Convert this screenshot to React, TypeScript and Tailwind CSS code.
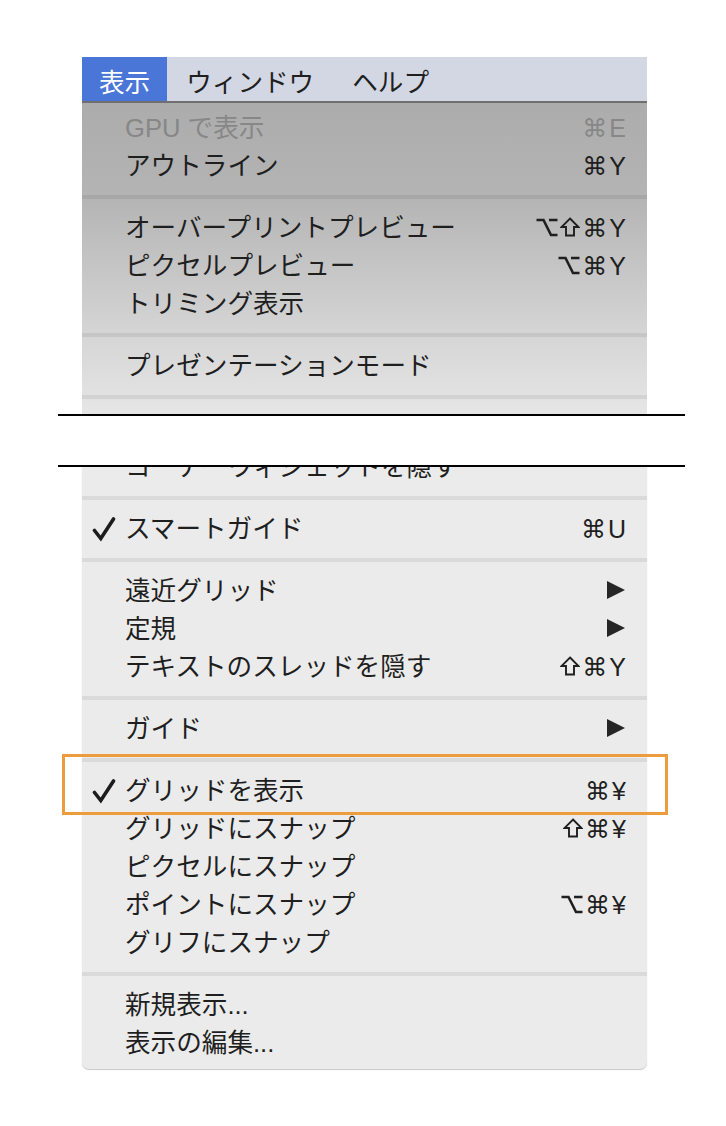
import type { ReactNode } from 'react'

type Row = {
  label: string
  sc?: string
  sub?: boolean
  check?: boolean
  disabled?: boolean
}

type Entry = Row | 'sep'

const TOP: Entry[] = [
  { label: 'GPU で表示', sc: '⌘E', disabled: true },
  { label: 'アウトライン', sc: '⌘Y' },
  'sep',
  { label: 'オーバープリントプレビュー', sc: '⌥⇧⌘Y' },
  { label: 'ピクセルプレビュー', sc: '⌥⌘Y' },
  { label: 'トリミング表示' },
  'sep',
  { label: 'プレゼンテーションモード' },
  'sep',
  { label: 'ズームイン', sc: '⌘+' },
]

const BOTTOM: Entry[] = [
  'sep',
  { label: 'スマートガイド', sc: '⌘U', check: true },
  'sep',
  { label: '遠近グリッド', sub: true },
  { label: '定規', sub: true },
  { label: 'テキストのスレッドを隠す', sc: '⇧⌘Y' },
  'sep',
  { label: 'ガイド', sub: true },
  'sep',
  { label: 'グリッドを表示', sc: '⌘¥', check: true },
  { label: 'グリッドにスナップ', sc: '⇧⌘¥' },
  { label: 'ピクセルにスナップ' },
  { label: 'ポイントにスナップ', sc: '⌥⌘¥' },
  { label: 'グリフにスナップ' },
  'sep',
  { label: '新規表示...' },
  { label: '表示の編集...' },
]

function Check() {
  return (
    <svg width="24" height="26" viewBox="0 0 24 26" className="text-[#1c1c1c]">
      <path d="M2.5 14.5 L8.8 22.5 L21.5 3" fill="none" stroke="currentColor" strokeWidth="3.6" strokeLinecap="round" />
    </svg>
  )
}

function Arrow() {
  return (
    <svg width="18" height="20" viewBox="0 0 18 20" className="mr-[1px] shrink-0 text-[#262626]">
      <polygon points="0,1 18,10 0,19" fill="currentColor" />
    </svg>
  )
}

// option key
function OptKey() {
  return (
    <svg width="22" height="19" viewBox="0 0 22 19" className="shrink-0">
      <path d="M0.5 2 H7.5 L15 17 H21.5 M13 2 H21.5" fill="none" stroke="currentColor" strokeWidth="2.6" />
    </svg>
  )
}

// shift key
function ShiftKey() {
  return (
    <svg width="20" height="20" viewBox="0 0 20 20" className="shrink-0">
      <polygon points="10,1.5 18.5,10 14,10 14,18.5 6,18.5 6,10 1.5,10" fill="none" stroke="currentColor" strokeWidth="1.9" />
    </svg>
  )
}

function Shortcut({ keys, dim }: { keys: string; dim?: boolean }) {
  return (
    <div className={`flex shrink-0 items-center gap-[2px] ${dim ? 'text-[#878787]' : 'text-[#1f1f1f]'}`}>
      {[...keys].map((k, i) =>
        k === '⌥' ? (
          <OptKey key={i} />
        ) : k === '⇧' ? (
          <ShiftKey key={i} />
        ) : (
          <span key={i} className="pt-[2px] font-['Liberation_Sans','DejaVu_Sans',sans-serif] text-[25px] leading-none">
            {k}
          </span>
        )
      )}
    </div>
  )
}

function MenuRow({ row }: { row: Row }) {
  return (
    <div className="flex h-[38px] items-center pr-[21px]">
      <div className="flex w-[43px] shrink-0 items-center pl-[10px] pt-[2px]">{row.check && <Check />}</div>
      <span
        className={`flex-1 whitespace-nowrap pt-[4px] font-['Liberation_Sans','Noto_Sans_CJK_JP',sans-serif] text-[25.6px] leading-none ${
          row.disabled ? 'text-[#878787]' : 'text-[#1f1f1f]'
        }`}
      >
        {row.label}
      </span>
      {row.sc && <Shortcut keys={row.sc} dim={row.disabled} />}
      {row.sub && <Arrow />}
    </div>
  )
}

function Entries({ list }: { list: Entry[] }) {
  return (
    <>
      {list.map((e, i) =>
        e === 'sep' ? (
          <div key={i} className="pb-[9px] pt-[11px]">
            <div className="h-[4px] bg-black/[0.07]" />
          </div>
        ) : (
          <MenuRow key={i} row={e} />
        )
      )}
    </>
  )
}

function BarItem({ children, active }: { children: ReactNode; active?: boolean }) {
  return (
    <div
      className={`flex h-full items-center pt-[3px] font-['Noto_Sans_CJK_JP',sans-serif] text-[25.6px] leading-none ${
        active ? 'bg-[#4a76d8] px-[17px] text-white' : 'px-[19px] text-[#1f1f1f]'
      }`}
    >
      {children}
    </div>
  )
}

export default function App() {
  return (
    <div className="min-h-[1126px] bg-white pt-[57px]">
      <div className="relative ml-[58px] flex w-[627px] flex-col">
        <div className="ml-[24px] w-[565px]">
          <div className="flex h-[46px] border-b-2 border-[#6f6f6f] bg-[#d2d7e3]">
            <BarItem active>表示</BarItem>
            <BarItem>ウィンドウ</BarItem>
            <BarItem>ヘルプ</BarItem>
          </div>
          <div className="h-[311px] overflow-hidden bg-[linear-gradient(180deg,#acacac_0%,#b4b4b4_30%,#d2d2d2_70%,#e6e6e6_100%)] pt-[5px]">
            <Entries list={TOP} />
          </div>
        </div>

        <div className="h-[2px] bg-black" />
        <div className="h-[49px] bg-white" />
        <div className="h-[2px] bg-black" />

        <div className="ml-[24px] w-[565px] rounded-b-[7px] bg-[#ebebeb] pb-[8px] shadow-[0_1px_1px_rgba(0,0,0,0.22)]">
          <div className="h-[18px] overflow-hidden">
            <div className="-mt-[20px]">
              <MenuRow row={{ label: 'コーナーウィジェットを隠す' }} />
            </div>
          </div>
          <Entries list={BOTTOM} />
        </div>

        <div className="pointer-events-none absolute left-[4px] top-[697px] h-[61px] w-[606px] border-[3px] border-[#ec9b3d]" />
      </div>
    </div>
  )
}
